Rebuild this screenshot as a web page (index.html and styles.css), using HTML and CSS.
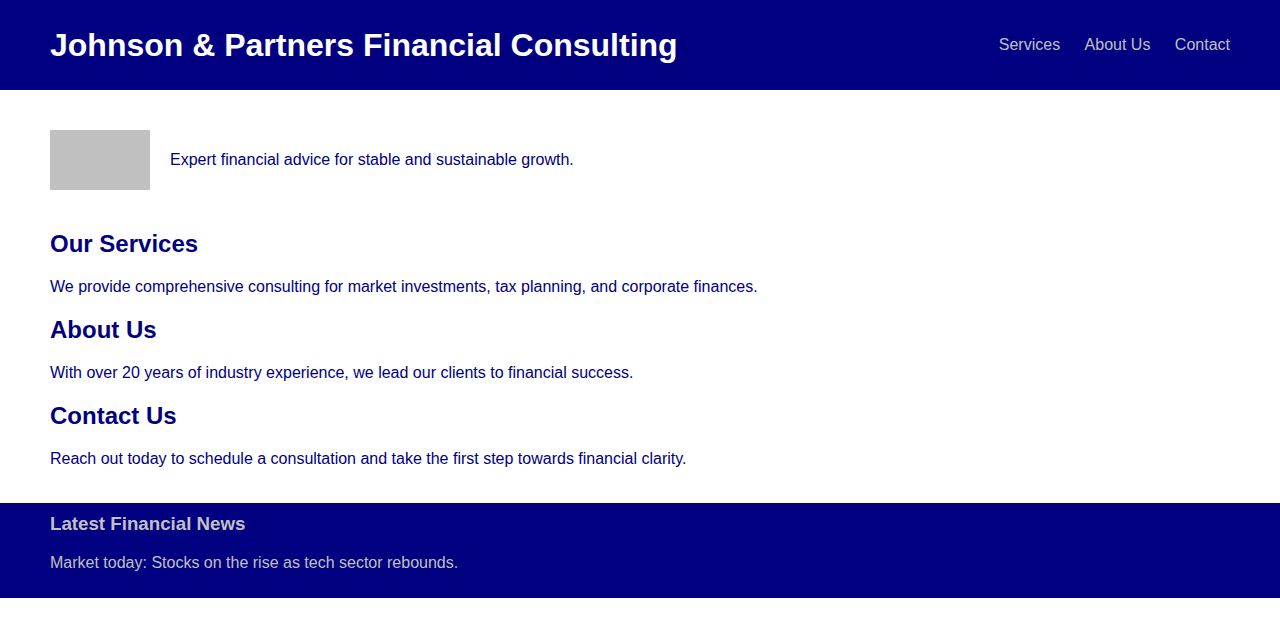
FILE: index.html
```html
<!DOCTYPE html>
<html lang="en">
<head>
<meta charset="utf-8">
<meta name="viewport" content="width=device-width, initial-scale=1">
<title>Johnson &amp; Partners Financial Consulting</title>
<link rel="stylesheet" href="styles.css">
</head>
<body>
<header class="site-header">
  <h1 class="site-title">Johnson &amp; Partners Financial Consulting</h1>
  <nav class="site-nav">
    <a href="#services">Services</a>
    <a href="#about">About Us</a>
    <a href="#contact">Contact</a>
  </nav>
</header>
<main class="content">
  <div class="intro">
    <div class="logo"></div>
    <p class="tagline">Expert financial advice for stable and sustainable growth.</p>
  </div>
  <section id="services" class="section">
    <h2>Our Services</h2>
    <p>We provide comprehensive consulting for market investments, tax planning, and corporate finances.</p>
  </section>
  <section id="about" class="section">
    <h2>About Us</h2>
    <p>With over 20 years of industry experience, we lead our clients to financial success.</p>
  </section>
  <section id="contact" class="section">
    <h2>Contact Us</h2>
    <p>Reach out today to schedule a consultation and take the first step towards financial clarity.</p>
  </section>
</main>
<aside class="news">
  <h3>Latest Financial News</h3>
  <p>Market today: Stocks on the rise as tech sector rebounds.</p>
</aside>
</body>
</html>
```
FILE: styles.css
```css
body {
  margin: 0;
  background: #fff;
  color: #000080;
  font-family: "Liberation Sans", Arial, sans-serif;
  font-size: 16px;
  line-height: 18px;
}

.site-header {
  display: flex;
  justify-content: space-between;
  align-items: center;
  padding: 20px 50px;
  background: #000080;
  color: #fff;
}

.site-title {
  margin: 0;
  font-size: 32px;
  line-height: 50px;
}

.site-nav a {
  margin-left: 20px;
  color: #c0c0c0;
  text-decoration: none;
}

.content {
  padding: 40px 50px 15px;
}

.intro {
  display: flex;
  align-items: center;
  gap: 20px;
  margin-bottom: 40px;
}

.logo {
  width: 100px;
  height: 60px;
  background: #c0c0c0;
}

.tagline {
  margin: 0;
}

.section h2 {
  margin: 0 0 20px;
  font-size: 24px;
  line-height: 28px;
}

.section p {
  margin: 0 0 20px;
}

.news {
  padding: 10px 50px;
  background: #000080;
  color: #c0c0c0;
}

.news h3 {
  margin: 0 0 20px;
  line-height: 21px;
}

.news p {
  margin: 0;
  padding-bottom: 16px;
}
```
